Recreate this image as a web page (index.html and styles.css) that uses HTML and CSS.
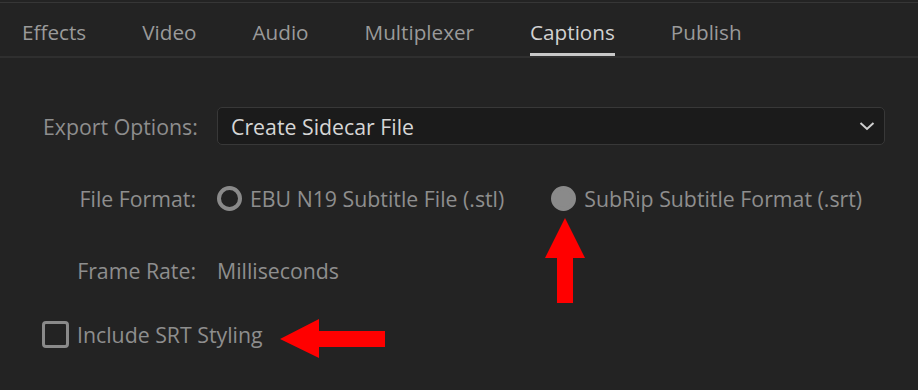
FILE: index.html
```html
<!DOCTYPE html>
<html lang="en">
<head>
    <meta charset="UTF-8">
    <meta name="viewport" content="width=device-width, initial-scale=1.0">
    <title>Export Settings - Captions</title>
    <link rel="stylesheet" href="styles.css">
</head>
<body>

    <div class="tabs">
        <div class="tab">Effects</div>
        <div class="tab">Video</div>
        <div class="tab">Audio</div>
        <div class="tab">Multiplexer</div>
        <div class="tab active">Captions</div>
        <div class="tab">Publish</div>
    </div>

    <div class="form">
        <div class="label">Export Options:</div>
        <div class="select">
            <span>Create Sidecar File</span>
            <svg class="chevron" width="16" height="10" viewBox="0 0 16 10">
                <polyline points="1.5,2 8,8 14.5,2" fill="none" stroke="#cfcfcf" stroke-width="2"/>
            </svg>
        </div>

        <div class="label">File Format:</div>
        <div class="radios">
            <div class="radio-option">
                <span class="radio"></span>
                <span>EBU N19 Subtitle File (.stl)</span>
            </div>
            <div class="radio-option">
                <span class="radio checked"></span>
                <span>SubRip Subtitle Format (.srt)</span>
            </div>
        </div>

        <div class="label">Frame Rate:</div>
        <div class="value">Milliseconds</div>
    </div>

    <div class="check-row">
        <span class="checkbox"></span>
        <span>Include SRT Styling</span>
    </div>

    <!-- annotation arrows -->
    <svg class="arrow arrow-up" width="40" height="85" viewBox="0 0 40 85">
        <polygon points="20,0 40,40 28,40 28,85 12,85 12,40 0,40" fill="#ff0000"/>
    </svg>
    <svg class="arrow arrow-left" width="105" height="39" viewBox="0 0 105 39">
        <polygon points="0,20 39,0 39,12 105,12 105,28 39,28 39,39" fill="#ff0000"/>
    </svg>

</body>
</html>
```

FILE: styles.css
```css
body {
    margin: 0;
    height: 390px;
    position: relative;
    background-color: #232323;
    color: #8e8e8e;
    font-family: "Open Sans", "Liberation Sans", sans-serif;
    font-size: 21.3px;
    overflow: hidden;
}
.tabs {
    display: flex;
    gap: 56px;
    margin-top: 2px;
    padding-left: 22px;
    height: 53px;
    border-top: 1px solid #363636;
    border-bottom: 2px solid #2f2f2f;
}
.tab {
    padding-top: 15px;
    padding-bottom: 4px;
    font-size: 20.7px;
    line-height: 28px;
    color: #9a9a9a;
    border-bottom: 3px solid transparent;
}
.tab.active {
    color: #d2d2d2;
    border-bottom-color: #c8c8c8;
}
.form {
    display: grid;
    grid-template-columns: 153px 1fr;
    grid-auto-rows: 38px;
    column-gap: 21px;
    row-gap: 34px;
    align-items: center;
    margin-top: 49px;
    padding: 0 33px 0 43px;
}
.label {
    text-align: right;
    white-space: nowrap;
}
.select {
    height: 38px;
    box-sizing: border-box;
    display: flex;
    align-items: center;
    justify-content: space-between;
    padding: 0 9px 0 13px;
    background-color: #1b1b1b;
    border: 1px solid #383838;
    border-radius: 5px;
    color: #d6d6d6;
}
.radios {
    display: flex;
    gap: 47px;
}
.radio-option {
    display: flex;
    align-items: center;
    gap: 8px;
}
.radio {
    width: 25px;
    height: 25px;
    box-sizing: border-box;
    border: 4px solid #8a8a8a;
    border-radius: 50%;
}
.radio.checked {
    background-color: #8a8a8a;
}
.check-row {
    display: flex;
    align-items: center;
    gap: 8px;
    margin: 31px 0 0 42px;
}
.checkbox {
    width: 27px;
    height: 27px;
    box-sizing: border-box;
    border: 3px solid #8a8a8a;
    border-radius: 4px;
}
.arrow {
    position: absolute;
}
.arrow-up {
    left: 545px;
    top: 218px;
}
.arrow-left {
    left: 280px;
    top: 319px;
}
```
